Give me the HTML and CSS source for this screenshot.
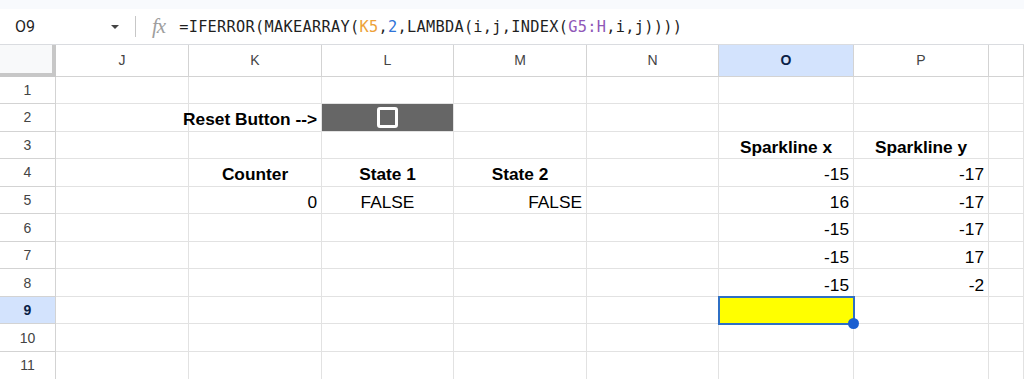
FILE: index.html
```html
<!DOCTYPE html>
<html lang="en">
<head>
    <meta charset="UTF-8">
    <meta name="viewport" content="width=device-width, initial-scale=1.0">
    <title>Sparkline Sheet</title>
    <link rel="stylesheet" href="styles.css">
</head>
<body>
    <div class="top-strip"></div>

    <!-- Name box + formula bar -->
    <div class="formula-bar">
        <div class="name-box">
            <span class="cell-ref">O9</span>
            <span class="caret"></span>
        </div>
        <div class="divider"></div>
        <span class="fx">fx</span>
        <span class="formula">=IFERROR(MAKEARRAY(<span class="ref-k">K5</span>,<span class="num">2</span>,LAMBDA(i,j,INDEX(<span class="ref-g">G5:H</span>,i,j))))</span>
    </div>

    <div class="sheet">
        <!-- column headers -->
        <div class="corner"></div>
        <div class="col-head">J</div>
        <div class="col-head">K</div>
        <div class="col-head">L</div>
        <div class="col-head">M</div>
        <div class="col-head">N</div>
        <div class="col-head active">O</div>
        <div class="col-head">P</div>
        <div class="col-head"></div>

        <!-- row 1 -->
        <div class="row-head">1</div>
        <div class="c"></div><div class="c"></div><div class="c"></div><div class="c"></div>
        <div class="c"></div><div class="c"></div><div class="c"></div><div class="c"></div>

        <!-- row 2 -->
        <div class="row-head">2</div>
        <div class="c"></div>
        <div class="c right bold">Reset Button --&gt;</div>
        <div class="c button-cell"><span class="checkbox"></span></div>
        <div class="c"></div><div class="c"></div><div class="c"></div><div class="c"></div><div class="c"></div>

        <!-- row 3 -->
        <div class="row-head">3</div>
        <div class="c"></div><div class="c"></div><div class="c"></div><div class="c"></div><div class="c"></div>
        <div class="c center bold">Sparkline x</div>
        <div class="c center bold">Sparkline y</div>
        <div class="c"></div>

        <!-- row 4 -->
        <div class="row-head">4</div>
        <div class="c"></div>
        <div class="c center bold">Counter</div>
        <div class="c center bold">State 1</div>
        <div class="c center bold">State 2</div>
        <div class="c"></div>
        <div class="c right">-15</div>
        <div class="c right">-17</div>
        <div class="c"></div>

        <!-- row 5 -->
        <div class="row-head">5</div>
        <div class="c"></div>
        <div class="c right">0</div>
        <div class="c center">FALSE</div>
        <div class="c right">FALSE</div>
        <div class="c"></div>
        <div class="c right">16</div>
        <div class="c right">-17</div>
        <div class="c"></div>

        <!-- row 6 -->
        <div class="row-head">6</div>
        <div class="c"></div><div class="c"></div><div class="c"></div><div class="c"></div><div class="c"></div>
        <div class="c right">-15</div>
        <div class="c right">-17</div>
        <div class="c"></div>

        <!-- row 7 -->
        <div class="row-head">7</div>
        <div class="c"></div><div class="c"></div><div class="c"></div><div class="c"></div><div class="c"></div>
        <div class="c right">-15</div>
        <div class="c right">17</div>
        <div class="c"></div>

        <!-- row 8 -->
        <div class="row-head">8</div>
        <div class="c"></div><div class="c"></div><div class="c"></div><div class="c"></div><div class="c"></div>
        <div class="c right">-15</div>
        <div class="c right">-2</div>
        <div class="c"></div>

        <!-- row 9 (selected) -->
        <div class="row-head active">9</div>
        <div class="c"></div><div class="c"></div><div class="c"></div><div class="c"></div><div class="c"></div>
        <div class="c selected"></div>
        <div class="c"></div>
        <div class="c"></div>

        <!-- row 10 -->
        <div class="row-head">10</div>
        <div class="c"></div><div class="c"></div><div class="c"></div><div class="c"></div>
        <div class="c"></div><div class="c"></div><div class="c"></div><div class="c"></div>

        <!-- row 11 -->
        <div class="row-head">11</div>
        <div class="c"></div><div class="c"></div><div class="c"></div><div class="c"></div>
        <div class="c"></div><div class="c"></div><div class="c"></div><div class="c"></div>
    </div>
</body>
</html>
```

FILE: styles.css
```css
* {
    box-sizing: border-box;
}
body {
    margin: 0;
    font-family: "Liberation Sans", Arial, sans-serif;
    background-color: #fff;
    overflow: hidden;
}
.top-strip {
    height: 9px;
    background-color: #f8fafd;
}
.formula-bar {
    height: 36px;
    display: flex;
    align-items: center;
    border-bottom: 1px solid #dadce0;
    background-color: #fff;
}
.name-box {
    width: 135px;
    display: flex;
    align-items: center;
    justify-content: space-between;
    padding: 0 16px 0 15px;
}
.cell-ref {
    font-family: Roboto, "Liberation Sans", sans-serif;
    font-size: 16px;
    color: #1f1f1f;
}
.caret {
    width: 0;
    height: 0;
    border-left: 4px solid transparent;
    border-right: 4px solid transparent;
    border-top: 4px solid #444;
}
.divider {
    width: 1px;
    height: 21px;
    background-color: #c7c7c7;
}
.fx {
    margin-left: 16px;
    font-family: "Liberation Serif", serif;
    font-style: italic;
    font-size: 21px;
    color: #9e9e9e;
    letter-spacing: -1px;
}
.formula {
    margin-left: 14px;
    font-family: "DejaVu Sans Mono", "Liberation Mono", monospace;
    font-size: 15.3px;
    letter-spacing: 0.28px;
    color: #1f1f1f;
}
.ref-k {
    color: #eda23a;
}
.num {
    color: #2f74d8;
}
.ref-g {
    color: #9058b8;
}

/* grid */
.sheet {
    display: grid;
    grid-template-columns: 56px 133px 133px 132px 133px 132px 135px 135px 1fr;
    grid-template-rows: 31.5px repeat(11, 27.55px);
}
.corner {
    background-color: #f8f9fa;
    border-right: 4px solid #c7c7c7;
    border-bottom: 4px solid #c7c7c7;
}
.col-head, .row-head {
    display: flex;
    align-items: center;
    justify-content: center;
    font-size: 14px;
    color: #444;
    border-right: 1px solid #d3d3d3;
    border-bottom: 1px solid #d3d3d3;
}
.col-head.active, .row-head.active {
    background-color: #d3e3fd;
    color: #0b1f47;
    font-weight: bold;
}
.c {
    display: flex;
    align-items: flex-end;
    padding: 0 4px 2px 4px;
    font-size: 17.3px;
    line-height: 1;
    color: #000;
    white-space: nowrap;
    border-right: 1px solid #e2e2e2;
    border-bottom: 1px solid #e2e2e2;
}
.right {
    justify-content: flex-end;
}
.center {
    justify-content: center;
}
.bold {
    font-weight: bold;
}
.button-cell {
    background-color: #666;
    align-items: center;
    justify-content: center;
    padding: 0;
}
.checkbox {
    width: 21px;
    height: 21px;
    border: 3px solid #fff;
    border-radius: 3px;
}
.selected {
    position: relative;
    background-color: #ffff00;
    outline: 2px solid #2f6fc4;
    outline-offset: -1px;
}
.selected::after {
    content: "";
    position: absolute;
    right: -6px;
    bottom: -6px;
    width: 11px;
    height: 11px;
    border-radius: 50%;
    background-color: #1b5fd1;
    z-index: 2;
}
```
